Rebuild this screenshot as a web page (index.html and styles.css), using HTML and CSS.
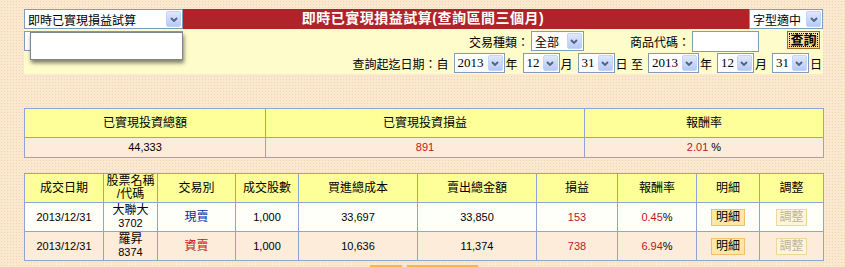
FILE: index.html
```html
<!DOCTYPE html>
<html lang="zh-TW">
<head>
<meta charset="UTF-8">
<title>即時已實現損益試算</title>
<link rel="stylesheet" href="styles.css">
</head>
<body>
<div class="page">
  <div class="topbar">
    <div class="sel sel-main"><span>即時已實現損益試算</span><i class="arr"><svg width="8" height="5" viewBox="0 0 8 5"><path d="M1 1 L4 4 L7 1" stroke="#4d6185" stroke-width="1.8" fill="none"/></svg></i></div>
    <div class="title">即時已實現損益試算(查詢區間三個月)</div>
    <div class="sel sel-font"><span>字型適中</span><i class="arr"><svg width="8" height="5" viewBox="0 0 8 5"><path d="M1 1 L4 4 L7 1" stroke="#4d6185" stroke-width="1.8" fill="none"/></svg></i></div>
  </div>

  <div class="panel">
    <div class="row row-query">
      <div class="combo">
        <input type="text" class="txt txt-wide">
        <div class="popup"></div>
      </div>
      <span class="lbl lbl-type">交易種類：</span>
      <div class="sel sel-type"><span>全部</span><i class="arr"><svg width="8" height="5" viewBox="0 0 8 5"><path d="M1 1 L4 4 L7 1" stroke="#4d6185" stroke-width="1.8" fill="none"/></svg></i></div>
      <span class="lbl lbl-code">商品代碼：</span>
      <input type="text" class="txt txt-code">
      <button class="btn-query">查詢</button>
    </div>
    <div class="row row-date">
      <span class="lbl">查詢起迄日期：自</span>
      <div class="sel sel-year"><span>2013</span><i class="arr"><svg width="8" height="5" viewBox="0 0 8 5"><path d="M1 1 L4 4 L7 1" stroke="#4d6185" stroke-width="1.8" fill="none"/></svg></i></div>
      <span class="lbl">年</span>
      <div class="sel sel-day"><span>12</span><i class="arr"><svg width="8" height="5" viewBox="0 0 8 5"><path d="M1 1 L4 4 L7 1" stroke="#4d6185" stroke-width="1.8" fill="none"/></svg></i></div>
      <span class="lbl">月</span>
      <div class="sel sel-day"><span>31</span><i class="arr"><svg width="8" height="5" viewBox="0 0 8 5"><path d="M1 1 L4 4 L7 1" stroke="#4d6185" stroke-width="1.8" fill="none"/></svg></i></div>
      <span class="lbl">日 至</span>
      <div class="sel sel-year"><span>2013</span><i class="arr"><svg width="8" height="5" viewBox="0 0 8 5"><path d="M1 1 L4 4 L7 1" stroke="#4d6185" stroke-width="1.8" fill="none"/></svg></i></div>
      <span class="lbl">年</span>
      <div class="sel sel-day"><span>12</span><i class="arr"><svg width="8" height="5" viewBox="0 0 8 5"><path d="M1 1 L4 4 L7 1" stroke="#4d6185" stroke-width="1.8" fill="none"/></svg></i></div>
      <span class="lbl">月</span>
      <div class="sel sel-day"><span>31</span><i class="arr"><svg width="8" height="5" viewBox="0 0 8 5"><path d="M1 1 L4 4 L7 1" stroke="#4d6185" stroke-width="1.8" fill="none"/></svg></i></div>
      <span class="lbl">日</span>
    </div>
  </div>

  <table class="grid summary">
    <colgroup><col style="width:241px"><col style="width:319px"><col style="width:239px"></colgroup>
    <tr class="head">
      <th>已實現投資總額</th>
      <th>已實現投資損益</th>
      <th>報酬率</th>
    </tr>
    <tr class="peach">
      <td class="num">44,333</td>
      <td class="num red">891</td>
      <td class="num"><span class="red">2.01</span> %</td>
    </tr>
  </table>

  <table class="grid detail">
    <colgroup>
      <col style="width:79px"><col style="width:54px"><col style="width:78px"><col style="width:63px"><col style="width:119px">
      <col style="width:119px"><col style="width:81px"><col style="width:79px"><col style="width:63px"><col style="width:64px">
    </colgroup>
    <tr class="head">
      <th>成交日期</th>
      <th>股票名稱<br>/代碼</th>
      <th>交易別</th>
      <th>成交股數</th>
      <th>買進總成本</th>
      <th>賣出總金額</th>
      <th>損益</th>
      <th>報酬率</th>
      <th>明細</th>
      <th>調整</th>
    </tr>
    <tr class="white">
      <td class="num">2013/12/31</td>
      <td>大聯大<br><span class="num">3702</span></td>
      <td class="blue">現賣</td>
      <td class="num">1,000</td>
      <td class="num">33,697</td>
      <td class="num">33,850</td>
      <td class="num red">153</td>
      <td class="num"><span class="red">0.45</span>%</td>
      <td><button class="btn-sm">明細</button></td>
      <td><button class="btn-sm off" disabled>調整</button></td>
    </tr>
    <tr class="peach">
      <td class="num">2013/12/31</td>
      <td>羅昇<br><span class="num">8374</span></td>
      <td class="red">資賣</td>
      <td class="num">1,000</td>
      <td class="num">10,636</td>
      <td class="num">11,374</td>
      <td class="num red">738</td>
      <td class="num"><span class="red">6.94</span>%</td>
      <td><button class="btn-sm">明細</button></td>
      <td><button class="btn-sm off" disabled>調整</button></td>
    </tr>
  </table>

  <div class="actions">
    <button class="btn-act short" aria-label="列印"></button>
    <button class="btn-act long" aria-label="匯出Excel"></button>
  </div>
</div>
</body>
</html>
```

FILE: styles.css
```css
body {
  margin: 0;
  font-family: "Liberation Sans", "Noto Sans CJK TC", sans-serif;
  font-size: 12px;
  color: #000;
  background-color: #fbe8d0;
  background-image: radial-gradient(circle, #f5d3aa 0.7px, transparent 0.9px);
  background-size: 3px 3px;
}

.page {
  width: 799px;
  padding: 9px 0 0 24px;
}

/* top bar */
.topbar {
  display: flex;
  height: 20px;
}

.title {
  flex: 1;
  background-color: #b0232a;
  color: #fff;
  font-size: 14px;
  font-weight: bold;
  letter-spacing: 0.5px;
  text-align: center;
  line-height: 19px;
  padding-right: 86px;
}

/* fake select boxes */
.sel {
  display: flex;
  align-items: center;
  justify-content: space-between;
  box-sizing: border-box;
  height: 20px;
  background: #fff;
  border: 1px solid #7f9db9;
  padding: 0 1px 0 3px;
  font-size: 12px;
  white-space: nowrap;
}

.sel .arr {
  display: flex;
  align-items: center;
  justify-content: center;
  box-sizing: border-box;
  width: 15px;
  height: 16px;
  border: 1px solid #c3d3fd;
  border-radius: 2px;
  background: linear-gradient(#dfe8fc, #b7c9f3);
}

.sel-main { width: 159px; }
.sel-font { width: 74px; }
.sel-type { width: 53px; margin-left: 2px; }

.sel-year,
.sel-day {
  font-family: "Liberation Serif", "Noto Sans CJK TC", serif;
  font-size: 13px;
  margin: 0 1px 0 5px;
}
.sel-year { width: 51px; }
.sel-day { width: 37px; }

/* query panel */
.panel {
  background-color: #fffccb;
  padding: 2px 1px 1px 0;
  display: flex;
  flex-direction: column;
  gap: 2px;
}

.row {
  display: flex;
  align-items: center;
  height: 20px;
}

.row-date {
  justify-content: flex-end;
}

.lbl {
  white-space: nowrap;
}

.combo {
  position: relative;
  margin-right: auto;
}

.txt {
  box-sizing: border-box;
  height: 20px;
  border: 1px solid #7f9db9;
  background: #fff;
  margin: 0;
  padding: 0 2px;
}

.txt-wide { width: 159px; display: block; }
.txt-code { width: 67px; height: 21px; margin-left: 2px; }

.popup {
  position: absolute;
  left: 6px;
  top: 1px;
  width: 153px;
  height: 28px;
  box-sizing: border-box;
  background: #fff;
  border: 1px solid #7b8791;
  box-shadow: 1px 3px 4px rgba(0, 0, 0, 0.5);
  z-index: 5;
}

.lbl-code { margin-left: 46px; }

.btn-query {
  margin: 0 2px 0 28px;
  height: 18px;
  width: 33px;
  padding: 0;
  font-family: inherit;
  font-size: 13px;
  font-weight: bold;
  line-height: 14px;
  background: linear-gradient(#ffe9b4, #fcd587);
  border: 1px solid #9c6b2a;
  outline: 1px dotted #000;
  outline-offset: -3px;
  align-self: flex-start;
}

/* tables */
.grid {
  border-collapse: collapse;
  table-layout: fixed;
  width: 799px;
}

.grid th,
.grid td {
  border: 1px solid #8ca4d6;
  text-align: center;
  font-weight: normal;
  padding: 1px 2px;
  line-height: 13px;
}

.summary {
  margin-top: 34px;
}

.summary .head th { height: 26px; }
.summary td { height: 17px; }

.detail {
  margin-top: 15px;
}

.detail .head th { height: 26px; }
.detail td { height: 26px; }

.head { background-color: #ffff99; }
.peach { background-color: #fdecd9; }
.white { background-color: #fffffa; }

.num { font-size: 11px; }
.red { color: #c0141c; }
.blue { color: #0a1fa8; }

.btn-sm {
  font-family: inherit;
  font-size: 12px;
  height: 17px;
  width: 34px;
  padding: 0;
  line-height: 14px;
  background: #ffe7a8;
  border: 1px solid #efbf6c;
  color: #000;
}

.btn-sm.off {
  background: #fff6d8;
  border-color: #f1d69c;
  color: #bcb3a0;
  width: 31px;
}

.actions {
  display: flex;
  justify-content: center;
  gap: 5px;
  margin-top: 4px;
}

.btn-act {
  height: 20px;
  background: #fee2a6;
  border: 1px solid #f5b850;
  border-top-width: 2px;
  padding: 0;
}

.btn-act.short { width: 32px; }
.btn-act.long { width: 71px; }
```
